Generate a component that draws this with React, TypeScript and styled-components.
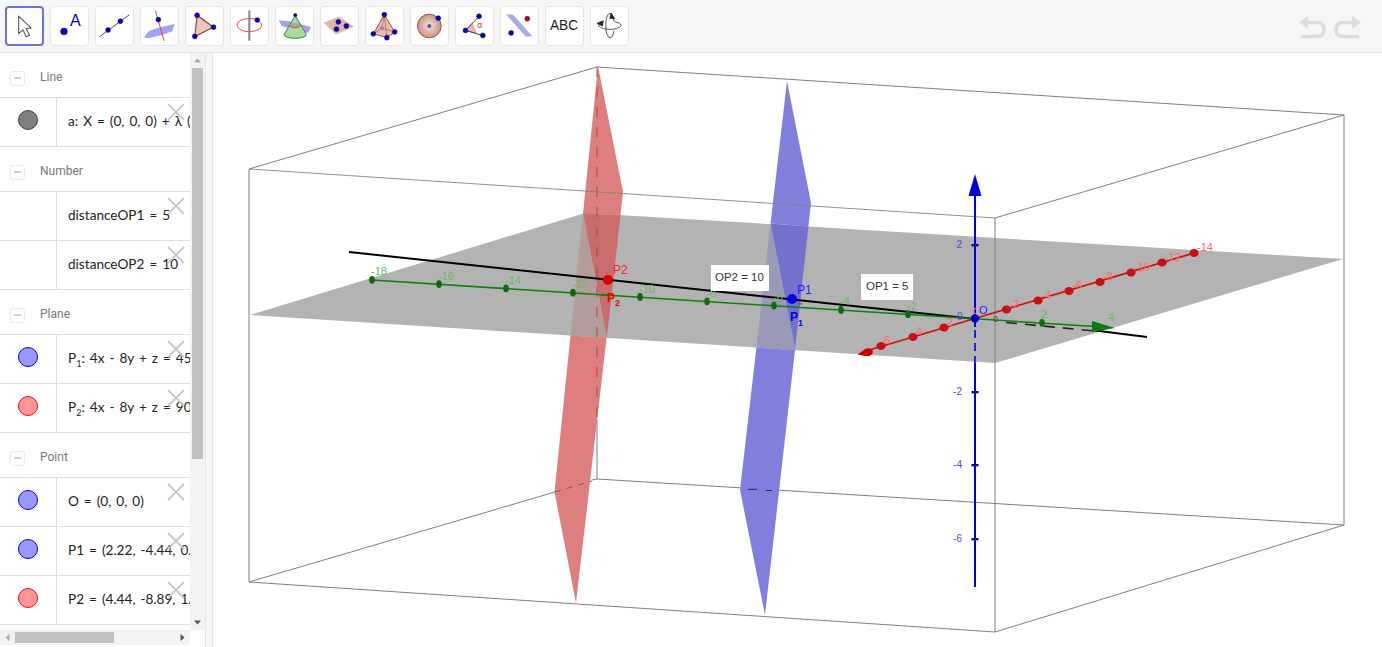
import React from "react";
import styled, { createGlobalStyle } from "styled-components";

const Global = createGlobalStyle`
  html, body, #root { margin: 0; padding: 0; height: 100%; overflow: hidden; background: #fff; }
`;
const Page = styled.div`
  display: flex; flex-direction: column; height: 100%;
  font-family: "Liberation Sans", Arial, sans-serif;
`;
const Toolbar = styled.header`
  flex: none; height: 53px; box-sizing: border-box; display: flex; align-items: flex-start;
  background: #f6f6f6; border-bottom: 1px solid #e1e1e1; padding: 6px 0 0 5px; gap: 6px;
`;
const ToolButton = styled.button<{ $selected?: boolean }>`
  flex: none; width: 39px; height: 40px; padding: 0; box-sizing: border-box; background: #fff;
  border: ${p => (p.$selected ? "2px solid #6b72ee" : "1px solid #e6e6e6")};
  border-radius: 4px; display: block;
  svg { display: block; width: 100%; height: 100%; }
`;
const History = styled.div`
  margin-left: auto; margin-right: 20px; margin-top: 8px; display: flex; gap: 8px;
`;
const HistoryIcon = styled.svg`
  display: block; width: 28px; height: 26px; fill: none; stroke: #dcdcdc; stroke-width: 3.6;
`;
const Main = styled.main`
  flex: 1; min-height: 0; display: flex;
`;
const Sidebar = styled.aside`
  flex: none; width: 205px; height: 592px; display: flex; flex-direction: column; overflow: hidden;
`;
const SideTop = styled.div`
  flex: none; height: 577px; display: flex;
`;
const List = styled.div`
  flex: none; width: 190px; overflow: hidden;
`;
const GroupHeader = styled.div`
  height: 45px; box-sizing: border-box; border-bottom: 1px solid #dedede; display: flex;
  align-items: center; padding: 6px 0 0 10px; gap: 15px; font: 12px Roboto, sans-serif; color: #777;
`;
const GroupTitle = styled.span`
  margin-bottom: 2px;
`;
const Collapse = styled.span`
  width: 15px; height: 15px; box-sizing: border-box; border: 1px solid #eaeaea; border-radius: 3px;
  display: flex; align-items: center; justify-content: center;
  &::before { content: ""; width: 7px; height: 2px; background: #cfcfcf; }
`;
const Row = styled.div`
  position: relative; height: 49px; box-sizing: border-box; border-bottom: 1px solid #dedede;
  display: flex; overflow: hidden;
`;
const MarbleCell = styled.div`
  flex: none; width: 57px; box-sizing: border-box; border-right: 1px solid #dedede; padding: 12px 0 0 18px;
`;
const Marble = styled.span<{ $fill: string; $edge: string }>`
  display: block; width: 20px; height: 20px; box-sizing: border-box; border-radius: 50%;
  background: ${p => p.$fill}; border: 1px solid ${p => p.$edge};
`;
const Formula = styled.div`
  padding: 13px 0 0 11px; white-space: nowrap; font: 13.6px/20px Lato, sans-serif; word-spacing: 1.5px; color: #222;
  sub { font-size: 9px; line-height: 0; }
`;
const Close = styled.svg`
  position: absolute; left: 167px; top: 5px; width: 18px; height: 18px;
  stroke: #c8c8c8; stroke-width: 1.8; fill: none;
`;
const VScroll = styled.div`
  flex: none; width: 15px; height: 100%; background: #f3f3f3; display: flex; flex-direction: column;
  align-items: center; box-sizing: border-box;
`;
const VThumb = styled.div`
  flex: none; width: 11px; height: 391px; background: #c1c1c1;
`;
const Arrow = styled.svg`
  flex: none; width: 15px; height: 15px; fill: #555; display: block;
`;
const Spacer = styled.div`flex: 1;`;
const HScrollRow = styled.div`
  flex: none; width: 190px; height: 15px; background: #f3f3f3; display: flex; align-items: center;
`;
const HThumb = styled.div`
  flex: none; width: 99px; height: 11px; background: #c1c1c1;
`;
const Gutter = styled.div`
  flex: none; width: 8px; box-sizing: border-box; background: #f6f6f6;
  border-left: 1px solid #e4e4e4; border-right: 1px solid #e4e4e4;
`;
const Canvas = styled.section`
  flex: 1; min-width: 0; background: #fff;
  svg { display: block; width: 100%; height: 100%; }
  text { font-family: "Liberation Sans", Arial, sans-serif; }
`;

const B = "#0000cc";
const Dot = ({ x, y, r = 2.6, c = B }: { x: number; y: number; r?: number; c?: string }) => (
  <circle cx={x} cy={y} r={r} fill={c} stroke="#00005a" strokeWidth={0.5} />
);
const icons: React.ReactNode[] = [
  <path key="0" d="M13 9V28.5L17.8 24.3L21.5 32L25 30.3L21.3 22.8L27 22.3Z" fill="#fff" stroke="#555" strokeWidth={1.2} strokeLinejoin="round" />,
  <g key="1"><Dot x={13.7} y={25.7} r={3.6} /><text x={20} y={20.5} fontSize={17} fill="#0000dd">A</text></g>,
  <g key="2"><line x1={3.7} y1={31.3} x2={35} y2={8.3} stroke="#444" strokeWidth={1} /><Dot x={12.7} y={24.3} /><Dot x={25.7} y={15} /></g>,
  <g key="3"><path d="M3 32L8 25.5L17 22L35.3 18L33 25.5L20 30L7 33Z" fill="#a3a3f2" /><line x1={15.3} y1={4} x2={24.3} y2={35.7} stroke="#ee3333" strokeWidth={1} /><Dot x={18.3} y={13.3} /></g>,
  <g key="4"><path d="M11.7 8.7L29 21.3L9.3 31Z" fill="#e6c8bc" stroke="#9b3535" strokeWidth={1.2} /><Dot x={11.7} y={8.7} /><Dot x={29} y={21.3} /><Dot x={9.3} y={31} /></g>,
  <g key="5"><ellipse cx={19.3} cy={19} rx={13} ry={7} fill="none" stroke="#ee4444" strokeWidth={1} /><rect x={18.2} y={3.5} width={2.2} height={32} fill="#888" /><Dot x={27.7} y={13.8} /></g>,
  <g key="6"><path d="M3 14L14 15L37 21L34 27L22 25L6 20Z" fill="#a3a3ea" /><path d="M20.3 9L8.5 29A11.8 4 0 0 0 32.1 29Z" fill="#a7d9a0" stroke="#2a8a2a" strokeWidth={1} /><path d="M16 17L24.5 17L26 20Q20 23 14.5 20Z" fill="#a89ca8" opacity={0.8} /><path d="M14.5 20Q20.5 23.5 26 20" fill="none" stroke="#ee3333" strokeWidth={1} /><Dot x={20.3} y={8.5} r={1.8} /></g>,
  <g key="7"><path d="M3 16.7L19 10L34.7 20.7L15.7 29Z" fill="#deb6a3" /><Dot x={18.3} y={15.7} /><Dot x={26.7} y={20} /><Dot x={16.3} y={23.3} /></g>,
  <g key="8"><path d="M19.3 8L7.7 28.3L22 32.3L30.3 26.3Z" fill="#e3bdae" stroke="#b03c3c" strokeWidth={1} /><path d="M19.3 8L22 32.3M19.3 8L16.7 22.3M7.7 28.3L16.7 22.3L30.3 26.3" fill="none" stroke="#b85050" strokeWidth={0.7} /><circle cx={16.7} cy={22.3} r={2.2} fill="#8e8ea8" /><Dot x={19.3} y={8} /><Dot x={7.7} y={28.3} /><Dot x={22} y={32.3} /><Dot x={30.3} y={26.3} /></g>,
  <g key="9"><defs><radialGradient id="sph" cx="50%" cy="50%" r="55%"><stop offset="0" stopColor="#f4e2d8" /><stop offset="1" stopColor="#c48c7a" /></radialGradient></defs><circle cx={19.3} cy={20} r={12.5} fill="url(#sph)" stroke="#a24a4a" strokeWidth={1} /><circle cx={19.3} cy={20} r={2.2} fill="#5a5ac0" /><Dot x={28.7} y={11.7} /></g>,
  <g key="10"><path d="M10 24.7L17 17L21 27.2Z" fill="#f3b4b4" stroke="#ee6666" strokeWidth={0.6} /><path d="M24.3 9.7L10 24.7L28.3 30" fill="none" stroke="#333" strokeWidth={1} /><text x={22.5} y={22} fontSize={9} fill="#dd3333">α</text><Dot x={10} y={24.7} /><Dot x={24.3} y={9.7} /><Dot x={28.3} y={30} /></g>,
  <g key="11"><path d="M5.5 8L12.5 8L33 30.7L26 31Z" fill="#a9a9f0" /><Dot x={27.7} y={12.3} c="#cc0000" /><Dot x={10.7} y={27.3} /></g>,
  <text key="12" x={19} y={24.5} textAnchor="middle" fontSize={14.5} fill="#222">ABC</text>,
  <g key="13" fill="none" stroke="#222" strokeWidth={0.8}><path d="M20 6.5A4.5 13 0 0 0 20 32.5" /><path d="M20 6.5A4.5 13 0 0 1 24.2 15M24.2 25A4.5 13 0 0 1 20 32.5" /><path d="M8 17.5A12 5 0 0 0 32 19.5A12 5 0 0 0 25 15.5" /><path d="M6.5 17L13 14.5L12 20Z" fill="#222" /><path d="M21 6.5L25 12L20 12Z" fill="#222" /></g>,
];

type Item = { m?: "g" | "b" | "r"; f: React.ReactNode };
const marble = { g: ["#808080", "#444"], b: ["#9999ff", "#0000ff"], r: ["#ff9999", "#ff0000"] } as const;
const groups: { title: string; items: Item[] }[] = [
  { title: "Line", items: [{ m: "g", f: "a: X = (0, 0, 0) + λ (4, -8, 1)" }] },
  { title: "Number", items: [{ f: "distanceOP1 = 5" }, { f: "distanceOP2 = 10" }] },
  { title: "Plane", items: [
    { m: "b", f: <>P<sub>1</sub>: 4x - 8y + z = 45</> },
    { m: "r", f: <>P<sub>2</sub>: 4x - 8y + z = 90</> },
  ] },
  { title: "Point", items: [
    { m: "b", f: "O = (0, 0, 0)" },
    { m: "b", f: "P1 = (2.22, -4.44, 0.56)" },
    { m: "r", f: "P2 = (4.44, -8.89, 1.11)" },
  ] },
];

const greenTicks = [-18, -16, -14, -12, -10, -8, -6, -4, -2, 2];
const redTicks: [string, number, number][] = [
  ["6", 881, 346], ["4", 913, 337], ["2", 944, 327.5], ["-2", 1006.5, 309.5], ["-4", 1038, 300.5],
  ["-6", 1069, 291], ["-8", 1100, 282], ["-10", 1131, 272.5], ["-12", 1162, 262.5], ["-14", 1194, 253],
];
const blueTicks: [string, number][] = [["2", 245], ["-2", 392], ["-4", 465], ["-6", 539]];
const boxLine = "#7f7f7f";

const Scene = () => (
  <svg viewBox="213 53 1169 594" preserveAspectRatio="xMinYMin slice">
    <g stroke={boxLine} strokeWidth={1} fill="none">
      <path d="M597 67L1344 115L1344 525L597 479L597 420" />
      <path d="M597 67L249 169L249 582L555 492M592 480L597 479" />
      <path d="M249 582L995 632L1344 525" />
      <path d="M995 218L1344 115" />
    </g>
    <polygon points="250,315 585,213 1343,259 995,363" fill="#b3b3b3" />
    <polygon points="598,66 623,192 620.4,215.5 583,213.6" fill="#de7f7f" />
    <polygon points="583,213.6 620.4,215.5 606.8,337.8" fill="#c86c6c" />
    <polygon points="583,213.6 607,337.8 570.5,335.5" fill="#b39c9c" />
    <polygon points="570.5,335.5 606.6,337.8 576,603 554.5,492" fill="#de7f7f" />
    <polygon points="787,81 811,203 808.4,226.5 770.5,223.5" fill="#8080dc" />
    <polygon points="770.5,223.5 808.4,226.5 795,350" fill="#7272cc" />
    <polygon points="770.5,223.5 795.5,350 756.4,347.6" fill="#9a9ab8" />
    <polygon points="756.4,347.6 795,350 765,615 740,490" fill="#8080dc" />
    <line x1={597} y1={67} x2={597} y2={420} stroke="#a04848" strokeWidth={1} strokeDasharray="10 10" />
    <line x1={555} y1={492} x2={592} y2={481} stroke="#a04848" strokeWidth={1} strokeDasharray="6 6" />
    <path d="M748 489.3H757M766 490.5H772" stroke="#1a1a88" strokeWidth={1} />
    <path d="M249 169L995 218" stroke={boxLine} strokeWidth={1} fill="none" opacity={0.85} />
    <path d="M995 218V632" stroke={boxLine} strokeWidth={1} fill="none" />

    <line x1={349} y1={252} x2={975} y2={319} stroke="#000" strokeWidth={2} />
    <line x1={1006} y1={322.5} x2={1095} y2={331} stroke="#222" strokeWidth={1.6} strokeDasharray="11 8" />
    <line x1={1095} y1={330.5} x2={1147} y2={337} stroke="#000" strokeWidth={2} />
    <path d="M602 295H608M787 306.5H793M798 304H802" stroke="#444" strokeWidth={1} />

    <line x1={372} y1={280} x2={1095} y2={326.5} stroke="#0d800d" strokeWidth={1.5} />
    <polygon points="1092,321 1115,328 1092,332" fill="#0e7a0e" />
    <g fontSize={11} fill="#66bb66">
      {greenTicks.map(t => {
        const x = 975 + t * 33.5;
        const y = 318.5 + t * 2.15;
        return (
          <g key={t}>
            <ellipse cx={x} cy={y} rx={2.8} ry={3.9} fill="#0c6b0c" />
            <text x={x - 1} y={y - 4.5}>{t}</text>
          </g>
        );
      })}
      <text x={1108} y={321}>4</text>
    </g>

    <line x1={866} y1={351} x2={1194} y2={253} stroke="#d01010" strokeWidth={1.8} />
    <path d="M857.5 354.5L866 348.5Q872 347 873 352Q872 357 865 356Z" fill="#cc0000" />
    <g fontSize={11} fill="#ff6a6a">
      {redTicks.map(([t, x, y]) => (
        <g key={t}>
          <ellipse cx={x} cy={y} rx={4.6} ry={4} fill="#c90f0f" />
          <text x={x + 3} y={y - 2}>{t}</text>
        </g>
      ))}
    </g>

    <line x1={975} y1={190} x2={975} y2={327} stroke="#0000dd" strokeWidth={2} />
    <line x1={975} y1={330} x2={975} y2={363} stroke="#0000dd" strokeWidth={1.6} strokeDasharray="8 5" />
    <line x1={975} y1={363} x2={975} y2={587} stroke="#0000dd" strokeWidth={2} />
    <polygon points="975,174 968.5,196 981.5,196" fill="#0000dd" />
    <g fontSize={10} fill="#4a4af0">
      {blueTicks.map(([t, y]) => (
        <g key={t}>
          <rect x={971.5} y={y - 1} width={7} height={2.4} fill="#0000aa" />
          <text x={962} y={y + 3} textAnchor="end">{t}</text>
        </g>
      ))}
      <text x={957} y={320}>0</text>
    </g>
    <text x={973} y={314} fontSize={9} fill="#ff8080">0</text>
    <text x={993} y={322} fontSize={9} fill="#4a4a4a">0</text>

    <rect x={711} y={265} width={58} height={26} fill="#fff" />
    <text x={715} y={281} fontSize={11.5} fill="#333">OP2 = 10</text>
    <rect x={861} y={274} width={52} height={26} fill="#fff" />
    <text x={866} y={290} fontSize={11.5} fill="#333">OP1 = 5</text>

    <circle cx={608} cy={280} r={5} fill="#dd0000" />
    <circle cx={792} cy={299} r={5} fill="#0000e0" />
    <circle cx={975} cy={318.5} r={4.2} fill="#0000c8" />
    <text x={613} y={274} fontSize={12} fill="#ff2020">P2</text>
    <text x={797} y={294} fontSize={12} fill="#2020ff">P1</text>
    <text x={979} y={314} fontSize={11} fill="#2020ff">O</text>
    <text x={607} y={302} fontSize={12} fontWeight={700} fill="#ee0000">P</text>
    <text x={615} y={306} fontSize={9} fontWeight={700} fill="#ee0000">2</text>
    <text x={790} y={321} fontSize={12} fontWeight={700} fill="#0000ee">P</text>
    <text x={798} y={326} fontSize={9} fontWeight={700} fill="#0000ee">1</text>
  </svg>
);

export default function App() {
  return (
    <Page>
      <Global />
      <Toolbar>
        {icons.map((icon, i) => (
          <ToolButton key={i} $selected={i === 0}>
            <svg viewBox="0 0 39 40">{icon}</svg>
          </ToolButton>
        ))}
        <History>
          <HistoryIcon viewBox="0 0 28 26">
            <path d="M5 8.5H19Q26 8.5 26 15.5T19 22.5H3" />
            <path d="M1 8.5L10 2V15Z" fill="#dcdcdc" stroke="none" />
          </HistoryIcon>
          <HistoryIcon viewBox="0 0 28 26">
            <path d="M23 8.5H9Q2 8.5 2 15.5T9 22.5H25" />
            <path d="M27 8.5L18 2V15Z" fill="#dcdcdc" stroke="none" />
          </HistoryIcon>
        </History>
      </Toolbar>
      <Main>
        <Sidebar>
          <SideTop>
            <List>
              {groups.map(g => (
                <React.Fragment key={g.title}>
                  <GroupHeader><Collapse /><GroupTitle>{g.title}</GroupTitle></GroupHeader>
                  {g.items.map((it, i) => (
                    <Row key={i}>
                      <MarbleCell>
                        {it.m && <Marble $fill={marble[it.m][0]} $edge={marble[it.m][1]} />}
                      </MarbleCell>
                      <Formula>{it.f}</Formula>
                      <Close viewBox="0 0 18 18"><path d="M1 1L17 17M17 1L1 17" /></Close>
                    </Row>
                  ))}
                </React.Fragment>
              ))}
            </List>
            <VScroll>
              <Arrow viewBox="0 0 15 15"><path d="M4 9.5L7.5 5.5L11 9.5Z" fill="#aaa" /></Arrow>
              <VThumb />
              <Spacer />
              <Arrow viewBox="0 0 15 15"><path d="M4 5.5L7.5 9.5L11 5.5Z" /></Arrow>
            </VScroll>
          </SideTop>
          <HScrollRow>
            <Arrow viewBox="0 0 15 15"><path d="M9.5 4L5.5 7.5L9.5 11Z" fill="#aaa" /></Arrow>
            <HThumb />
            <Spacer />
            <Arrow viewBox="0 0 15 15"><path d="M5.5 4L9.5 7.5L5.5 11Z" /></Arrow>
          </HScrollRow>
        </Sidebar>
        <Gutter />
        <Canvas><Scene /></Canvas>
      </Main>
    </Page>
  );
}
